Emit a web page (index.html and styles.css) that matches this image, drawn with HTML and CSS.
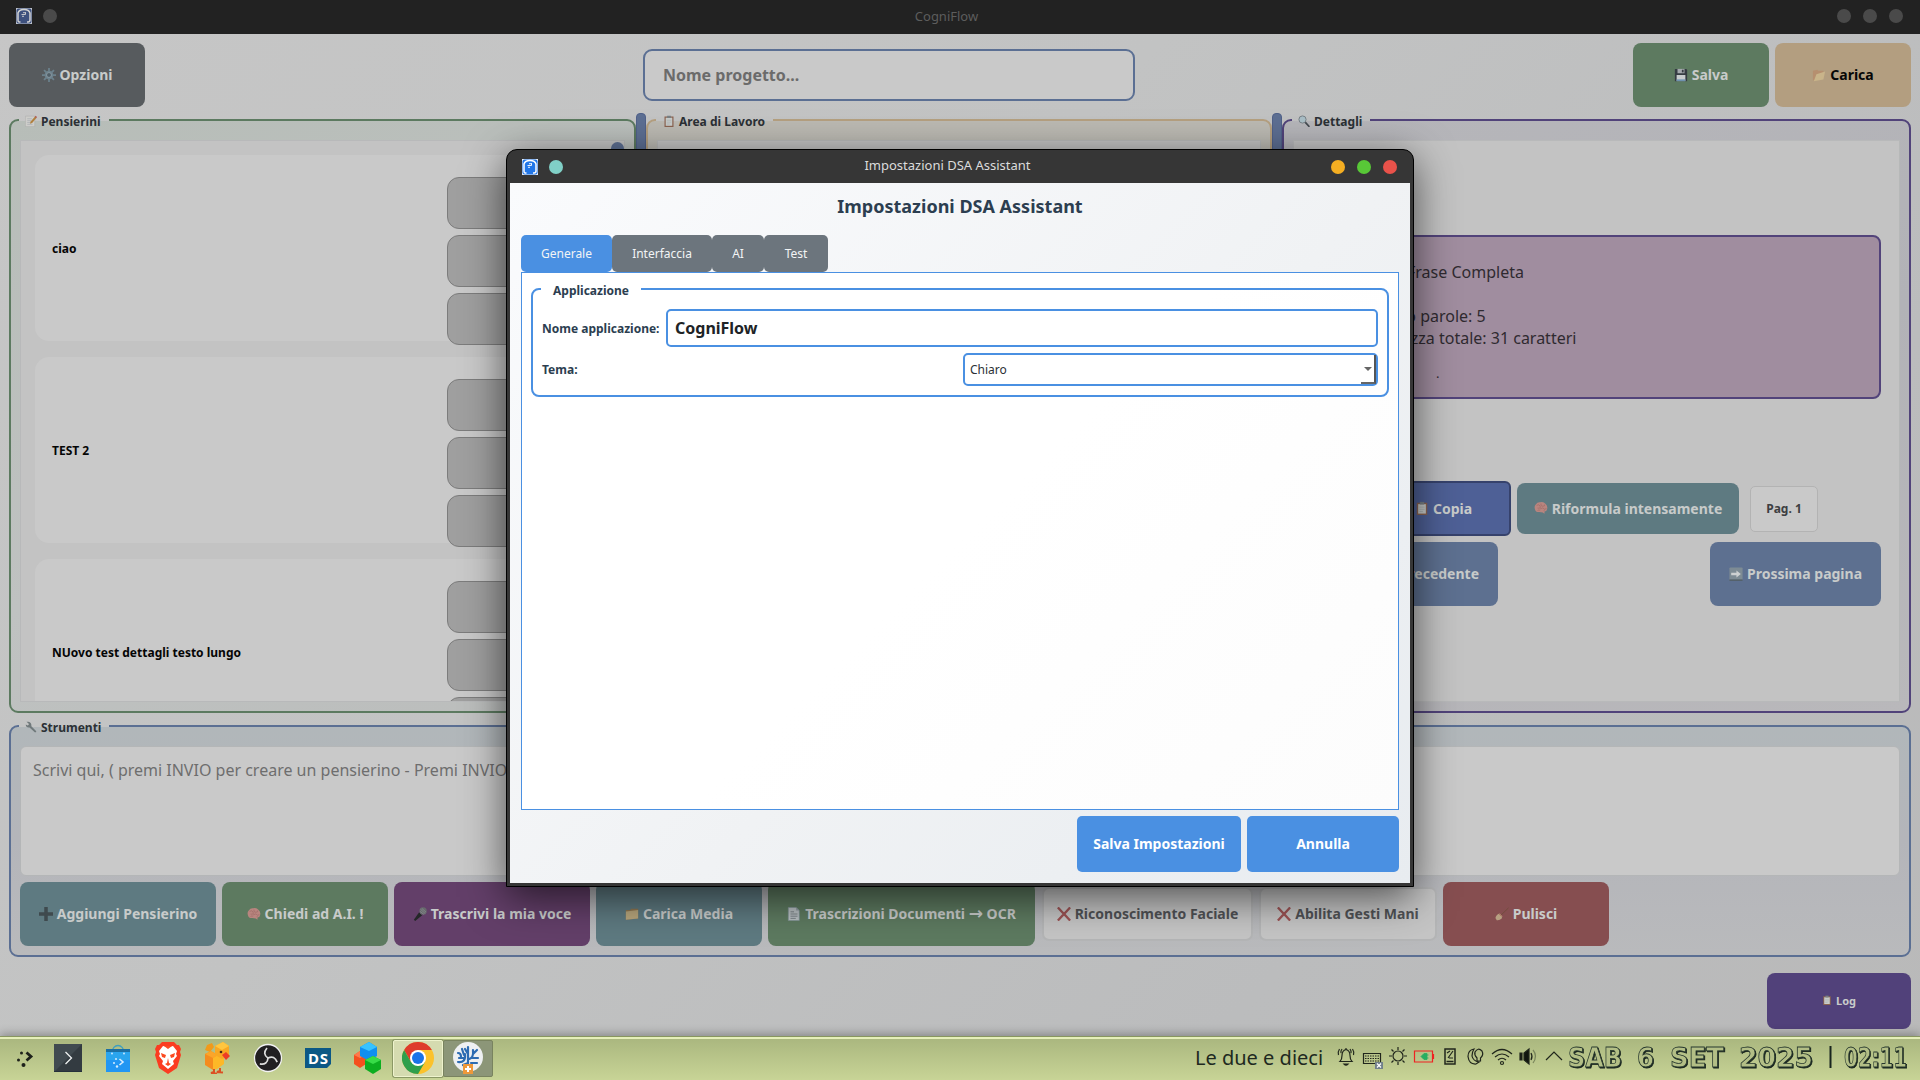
FILE: index.html
```html
<!DOCTYPE html>
<html lang="it">
<head>
<meta charset="utf-8">
<title>CogniFlow</title>
<link rel="stylesheet" href="styles.css">
</head>
<body>
<svg class="sprite" aria-hidden="true">
  <symbol id="app" viewBox="0 0 16 16"><rect width="16" height="16" fill="#e8eef8"/><rect x=".5" y=".5" width="15" height="15" rx="2" fill="currentColor"/><path d="M4.500 14H3Q2 14 2 12V5Q3 1.500 8 1.500T14 5v7q0 2-2 2h-1" fill="none" stroke="#fff" stroke-width="1.500"/><path d="M5.500 13V11L4 9q-.5-4 2-5.500 3-1 5 1 1.500 3-.5 5.500v3" fill="currentColor"/><path d="M5.500 6.500h4M7 4.700h3M6 8.300h2M9.500 6.500v-2" stroke="#fff" stroke-width=".9" fill="none"/></symbol>
  <symbol id="gear" viewBox="0 0 16 16"><path d="M8 0v16M0 8h16M2.300 2.300l11.400 11.400M13.700 2.300L2.300 13.700" stroke="#6c818c" stroke-width="2"/><circle cx="8" cy="8" r="5" fill="#6c818c"/><circle cx="8" cy="8" r="2.800" fill="#4f5d66" stroke="#8b9ba3"/></symbol>
  <symbol id="memo" viewBox="0 0 16 16"><path d="M.5 1.500h12.500V15.500H.5z" fill="#cdcdca" stroke="#a5a5a5" stroke-width=".6"/><path d="M3 5h6M3 7.500h5M3 10h4M3 12.500h7" stroke="#a3a8ac" stroke-width=".8"/><path d="M6.500 11.500l1-3L13.500 2l2 1.500-6 7z" fill="#b0803f"/><path d="M13 2.500l1.200-1.500 1.800 1.600-1 1.400z" fill="#b05656"/></symbol>
  <symbol id="clip" viewBox="0 0 16 16"><path d="M2 2h12v14H2z" fill="#8a6350"/><path d="M3.600 3.600h8.800v10.800H3.600z" fill="#c8ccca"/><path d="M5.500 1h5v3h-5z" fill="#777f84"/><path d="M5 7h6M5 9.500h6M5 12h4" stroke="#a3aaa9" stroke-width=".7"/></symbol>
  <symbol id="lens" viewBox="0 0 16 16"><path d="M9.500 9.500l5 5.500" stroke="#444b50" stroke-width="2.400" stroke-linecap="round"/><circle cx="6" cy="6" r="4.800" fill="#a9bfc7" stroke="#727b80" stroke-width="1.200"/></symbol>
  <symbol id="floppy" viewBox="0 0 16 16"><path d="M1 1h13l1 1v13H1z" fill="#353c42"/><path d="M4 1h8v5H4z" fill="#a4a9ad"/><path d="M9 2h2v3H9z" fill="#353c42"/><path d="M3 8h10v7H3z" fill="#c7cccd"/><path d="M3 13h10v2H3z" fill="#6e92b0"/></symbol>
  <symbol id="open" viewBox="0 0 16 16"><path d="M1 14V3l5-1 1 1h6v3L5 14z" fill="#b68f6f"/><path d="M2 15L5 7l10-3-2 9z" fill="#c9b48a"/></symbol>
  <symbol id="folder" viewBox="0 0 16 16"><path d="M1 14.500V3.500h5l1-1.500h8v11z" fill="#8f7650"/><path d="M1 14.500V5l14-1.500v9.500z" fill="#b8a67c"/></symbol>
  <symbol id="brain" viewBox="0 0 16 16"><path d="M1 9Q0 6 2 4q2-3 5-2.500 4-1 6 1.500 3 2.500 2 6-.5 3-3 3v2.500l-2-1.500-4-.5Q1.500 13 1 9z" fill="#b9857f"/><path d="M3 5q3-2 4 1t-3 2M8 3q-1 3 2 3t2-2M7 9q3-2 5 0M4 11q2-2 3 0M11 11q2-1 3-3" stroke="#9a6762" fill="none" stroke-width=".7"/></symbol>
  <symbol id="plus" viewBox="0 0 16 16"><path d="M8 0v16M0 8h16" stroke="#3f4a4e" stroke-width="4"/></symbol>
  <symbol id="mic" viewBox="0 0 16 16"><path d="M7 6l3.500 3.500-8 6.500-1.500-1.500z" fill="#242728"/><circle cx="11.500" cy="4.500" r="4.200" fill="#66696c"/><path d="M8.500 2.500l5.500 5M10 1.500l5 4.500M8 5l4.500 3.500" stroke="#9a9da0" stroke-width=".6"/></symbol>
  <symbol id="doc" viewBox="0 0 16 16"><path d="M1.500 .5h9L14 4v11.500H1.500z" fill="#b8bfc2" stroke="#809299" stroke-width=".7"/><path d="M10.500.5V4H14" fill="#8d999e"/><path d="M4 5.500h4M4 8h8M4 10.500h8M4 13h6" stroke="#737c80"/></symbol>
  <symbol id="cross" viewBox="0 0 16 16"><path d="M1 .5L8 8l7-7.500M1 15.500L8 8l7 7.500" stroke="#9d5354" stroke-width="2.600" fill="none"/></symbol>
  <symbol id="broom" viewBox="0 0 16 16"><path d="M15.500 1L6 10" stroke="#704c3b" stroke-width="1"/><path d="M5.500 7.500l3 3-1 2.500Q5.500 15.500 2 15L.5 12.500q1-4 5-5z" fill="#b7a082"/><path d="M5 8l3 3" stroke="#9d4a45" stroke-width=".8"/></symbol>
  <symbol id="next" viewBox="0 0 16 16"><rect x=".5" y=".5" width="15" height="15" rx="1" fill="#7d8b94"/><path d="M.5 15h15" stroke="#4d5961" stroke-width="1.500"/><path d="M2.500 6.500h6V4l5 4-5 4V9.500h-6z" fill="#cdd0d1"/></symbol>
  <symbol id="wrench" viewBox="0 0 16 16"><path d="M2 1l3 2.500V5L3.500 6 1 4.500Q1 9 6 8.500L13 15q2 .5 2-1.500L8.500 7Q9 2 4.500 1z" fill="#70797b"/></symbol>
</svg>

<div class="window">
  <header class="bar">
    <div class="bar-side"><svg class="app-icon dim"><use href="#app"/></svg><i class="dot"></i></div>
    <span>CogniFlow</span>
    <div class="bar-side end"><i class="dot"></i><i class="dot"></i><i class="dot"></i></div>
  </header>

  <nav class="toolbar">
    <button class="btn grey w136"><svg class="emo"><use href="#gear"/></svg>Opzioni</button>
    <div class="project">Nome progetto...</div>
    <div class="pair">
      <button class="btn green w136"><svg class="emo"><use href="#floppy"/></svg>Salva</button>
      <button class="btn sand w136"><svg class="emo"><use href="#open"/></svg>Carica</button>
    </div>
  </nav>

  <main class="panels">
    <fieldset class="group g-green">
      <legend><svg class="emo"><use href="#memo"/></svg>Pensierini</legend>
      <div class="well list">
        <article class="card"><b>ciao</b><div class="acts"><i></i><i></i><i></i></div></article>
        <article class="card"><b>TEST 2</b><div class="acts"><i></i><i></i><i></i></div></article>
        <article class="card"><b>NUovo test dettagli testo lungo</b><div class="acts"><i></i><i></i><i></i></div></article>
        <div class="thumb"></div>
      </div>
    </fieldset>
    <div class="splitter"></div>
    <fieldset class="group g-sand">
      <legend class="wide"><svg class="emo"><use href="#clip"/></svg>Area di Lavoro</legend>
      <div class="well"></div>
    </fieldset>
    <div class="splitter"></div>
    <fieldset class="group g-purple">
      <legend><svg class="emo"><use href="#lens"/></svg>Dettagli</legend>
      <div class="well details">
        <div class="summary">
          <p>Frase Completa</p>
          <p class="gap">Numero parole: 5</p>
          <p>Lunghezza totale: 31 caratteri</p>
          <small>.</small>
        </div>
        <div class="row1">
          <button class="btn copy"><svg class="emo"><use href="#clip"/></svg>Copia</button>
          <button class="btn teal reform"><svg class="emo"><use href="#brain"/></svg>Riformula intensamente</button>
          <span class="page">Pag. 1</span>
        </div>
        <div class="row2">
          <button class="btn blue prev">Pagina precedente</button>
          <button class="btn blue nextp"><svg class="emo"><use href="#next"/></svg>Prossima pagina</button>
        </div>
      </div>
    </fieldset>
  </main>

  <fieldset class="group g-blue tools">
    <legend><svg class="emo"><use href="#wrench"/></svg>Strumenti</legend>
    <div class="entry">Scrivi qui, ( premi INVIO per creare un pensierino - Premi INVIO</div>
    <div class="tool-row">
      <button class="btn teal w196"><svg class="emo"><use href="#plus"/></svg>Aggiungi Pensierino</button>
      <button class="btn green w166"><svg class="emo"><use href="#brain"/></svg>Chiedi ad A.I. !</button>
      <button class="btn plum w196"><svg class="emo"><use href="#mic"/></svg>Trascrivi la mia voce</button>
      <button class="btn teal w166"><svg class="emo"><use href="#folder"/></svg>Carica Media</button>
      <button class="btn green w267"><svg class="emo"><use href="#doc"/></svg><span>Trascrizioni Documenti <span class="to">→</span> OCR</span></button>
      <button class="btn light w211"><svg class="emo"><use href="#cross"/></svg>Riconoscimento Faciale</button>
      <button class="btn light w178"><svg class="emo"><use href="#cross"/></svg>Abilita Gesti Mani</button>
      <button class="btn red w166"><svg class="emo"><use href="#broom"/></svg>Pulisci</button>
    </div>
  </fieldset>
  <div class="log-row"><button class="btn violet log"><svg class="emo"><use href="#clip"/></svg>Log</button></div>

  <footer class="taskbar">
    <div class="launchers">
      <span class="task start"><svg width="18" height="18" viewBox="0 0 18 18"><g fill="#1d211b"><circle cx="5.500" cy="4" r="1.500"/><circle cx="2.500" cy="11" r="1.500"/><circle cx="7.500" cy="16" r="2"/></g><path d="M10.500 3.500L15 7.500l-4.500 4" fill="none" stroke="#1d211b" stroke-width="2.800"/></svg></span>
      <span class="task"><svg width="28" height="28" viewBox="0 0 28 28"><path d="M0 0h28v28H0z" fill="#404a50"/><path d="M0 28L28 0v28z" fill="#333b41"/><path d="M0 27.500h28" stroke="#26313a"/><path d="M11.500 8l6 6-6 6" fill="none" stroke="#eef1f2" stroke-width="1.300"/></svg></span>
      <span class="task"><svg width="26" height="28" viewBox="0 0 26 28"><path d="M7 9C7-1 19-1 19 9" fill="none" stroke="#3f9fc0" stroke-width="1.300"/><path d="M1 5h24v4H1z" fill="#1c6fa3"/><path d="M1 8h24v20H1z" fill="#2196f3"/><path d="M1 8h24v8H1z" fill="#2aa5ee"/><g fill="#d6ecff"><circle cx="11" cy="15" r="1"/><circle cx="9" cy="19" r="1"/><circle cx="12" cy="22.500" r="1.200"/><circle cx="7" cy="9.500" r=".9"/><circle cx="19" cy="9.500" r=".9"/></g><path d="M14.500 15l3.500 3-3.500 3" fill="none" stroke="#d6ecff" stroke-width="1.600"/></svg></span>
      <span class="task"><svg width="28" height="32" viewBox="0 0 28 32"><path d="M8 0h12l3 3 2 0 2 4-1 3 1 3-4 13-9 6-9-6L1 13l1-3-1-3 2-4h2z" fill="#fb3c21"/><path d="M14 5l5-1 4 5-1 3 1 2-4 5 1 3-6 5-6-5 1-3-4-5 1-2-1-3 4-5z" fill="#fff"/><path d="M7 11l5 2-1 3-3-1zM21 11l-5 2 1 3 3-1zM14 16l1 5 2 1-3 2-3-2 2-1zM10 4l4 3 4-3" fill="#fb4a21"/></svg></span>
      <span class="task"><svg width="28" height="32" viewBox="0 0 28 32"><path d="M3 3l5-2 2 4-4 5-5-2z" fill="#f19a1b"/><path d="M1 12l6-3 7 4v12l-5 3-8-5z" fill="#f58c1e"/><path d="M1 12l6-3 7 4-5 3z" fill="#fba52a"/><path d="M9 16l5-3 6 3v6l-7 5-4 1z" fill="#fdb827"/><path d="M11 4l8-4 6 4v9l-7 4-7-4z" fill="#f8a823"/><path d="M11 4l8-4 6 4-7 4z" fill="#ffc63f"/><path d="M18 13l4-3 4 4-4 4z" fill="#ed3d25"/><circle cx="17" cy="10" r="1.300" fill="#432a19"/><path d="M10 27v3l-3 1 6 .5M16 26v3l-3 1 6 .5" fill="none" stroke="#dc5023" stroke-width="2"/></svg></span>
      <span class="task"><svg width="30" height="30" viewBox="0 0 30 30"><circle cx="15" cy="15" r="13.500" fill="#211f22" stroke="#f2f2f2" stroke-width="1.300"/><g fill="none" stroke="#ddd" stroke-width="1.700"><path id="ob" d="M15 15Q9 11 14 5"/><use href="#ob" transform="rotate(120 15 15)"/><use href="#ob" transform="rotate(240 15 15)"/></g></svg></span>
      <span class="task"><svg width="28" height="22" viewBox="0 0 28 22"><path d="M1 1h26v16l-4 4H1z" fill="#0b5885"/><text x="14" y="17" text-anchor="middle" textLength="20" class="ds">DS</text></svg></span>
      <span class="task"><svg width="28" height="32" viewBox="0 0 28 32"><path d="M0 13l6-4 6 4v9l-6 4-6-4z" fill="#f4501e"/><path d="M0 13l6-4 6 4-6 3z" fill="#ff7a4b"/><path d="M6 5l9-5 8 5v9l-8 5-9-5z" fill="#0f8ff0"/><path d="M6 5l9-5 8 5-8 4z" fill="#36c3ff"/><path d="M11 18l8-4 8 4v9l-8 5-8-5z" fill="#0cae20"/><path d="M11 18l8-4 8 4-8 4z" fill="#37dc48"/></svg></span>
      <span class="task on"><svg width="32" height="32" viewBox="0 0 32 32"><circle cx="16" cy="16" r="16" fill="#fbc22b"/><path d="M16 8h13.860A16 16 0 0 0 2.140 8L9 20z" fill="#de3b2c"/><path d="M2.140 8A16 16 0 0 0 16 32l7-12-7 4-7-4z" fill="#2f9f4c"/><circle cx="16" cy="16" r="8" fill="#fff"/><circle cx="16" cy="16" r="6" fill="#1a73e8"/></svg></span>
      <span class="task active"><svg width="30" height="32" viewBox="0 0 30 32"><circle cx="15" cy="15" r="15" fill="#eef0f2"/><path d="M5 11q3 0 3 4M5 20q8 1 7-8M9 7l2 6M15 5v17M15 12l-3-5M15 17q6 0 5-9M20 12l4-4M19 16h6M18 21h6M15 21l-5 2M6 16h5" stroke="#2c6bb2" stroke-width="2.200" fill="none" stroke-linecap="round"/><path d="M10 22h10v10H10z" fill="#ee983a"/><path d="M15 24v6M12 27h6" stroke="#fff" stroke-width="2"/></svg></span>
    </div>
    <div class="tray">
      <span class="fuzzy">Le due e dieci</span>
      <svg class="tray-icons" width="229" height="26" viewBox="0 0 229 26" fill="none" stroke="#20261c" stroke-width="1.200">
        <path d="M4 16.500h12q-2-2-2-6 0-5-4-6-4 1-4 6 0 4-2 6zM10 3v2M2.500 10q-1-3 1-6M5 8q-.5-2 1-4M17.500 10q1-3-1-6M15 8q.5-2-1-4"/><path d="M8 19q2 2 4 0z" fill="#20261c"/>
        <path d="M27.500 8.500h17v10h-17z"/><path d="M29 11h14M29 13.500h14M29 16h14" stroke-dasharray="1.500 1"/><path d="M39 17h8v7h-8z" fill="#71808a" stroke="none"/><path d="M41 18.500l4 4M45 18.500l-4 4" stroke="#fff"/>
        <circle cx="62" cy="11" r="5"/><path d="M62 2v3M62 17v3M53 11h3M68 11h3M55.500 4.500l2 2M66.500 15.500l2 2M68.500 4.500l-2 2M57.500 15.500l-2 2"/>
        <path d="M78.500 6h18v11h-18z" stroke="#ef2222"/><path d="M97.500 9v5" stroke="#ef2222"/><path d="M85 11.500l3-3h3v6h-3zM90 10h2.500M90 13h2.500" fill="#27ae60" stroke="#27ae60" stroke-width=".8"/>
        <path d="M109 4h10v15h-10zM110.500 16.500h7" stroke-width="1.500"/><path d="M112 13l5-7M111 8l3-2M113 13h4"/>
        <path d="M138 4q-6 1-6 7.500 1 8 8 7.500l3-2q-6-1-7-6 0-4 2-7z"/><path d="M141 13q-3-3-2-6 3-5 7-1 2 4-1.500 7v3H141z"/>
        <path d="M156 9q10-9 20 0M159 12q7-6 14 0M162 15q4-3.500 8 0"/><circle cx="166" cy="18" r="1.500"/>
        <path d="M184 8v7h2V8zM188 8l5-4v15l-5-4z" fill="#10150e"/><path d="M195 8q2 3.500 0 7"/><path d="M197 5q5 6 0 13" stroke="#78855b"/>
        <path d="M210 15l8-8 8 8"/>
      </svg>
      <svg class="clock" width="350" height="38" viewBox="0 0 350 38">
        <text x="3" y="28" textLength="54" lengthAdjust="spacingAndGlyphs">SAB</text><text x="72" y="28" textLength="17" lengthAdjust="spacingAndGlyphs">6</text><text x="105" y="28" textLength="54" lengthAdjust="spacingAndGlyphs">SET</text><text x="174" y="28" textLength="74" lengthAdjust="spacingAndGlyphs">2025</text><text x="279" y="28" textLength="63" lengthAdjust="spacingAndGlyphs">02:11</text>
        <path d="M265.500 7v22" stroke="#18241e" stroke-width="2"/>
      </svg>
    </div>
  </footer>
</div>

<section class="dialog">
  <header class="bar">
    <div class="bar-side"><svg class="app-icon"><use href="#app"/></svg><i class="dot aqua"></i></div>
    <span>Impostazioni DSA Assistant</span>
    <div class="bar-side end"><i class="dot amber"></i><i class="dot lime"></i><i class="dot rose"></i></div>
  </header>
  <div class="dialog-body">
    <h1>Impostazioni DSA Assistant</h1>
    <div class="tabs"><span class="tab t1">Generale</span><span class="tab t2">Interfaccia</span><span class="tab t3">AI</span><span class="tab t4">Test</span></div>
    <div class="pane">
      <fieldset class="settings">
        <legend>Applicazione</legend>
        <div class="field"><label>Nome applicazione:</label><div class="input">CogniFlow</div></div>
        <div class="field"><label>Tema:</label><div class="select">Chiaro<i class="arrow"></i></div></div>
      </fieldset>
    </div>
    <div class="actions"><button class="primary save">Salva Impostazioni</button><button class="primary cancel">Annulla</button></div>
  </div>
</section>
</body>
</html>
```
FILE: styles.css
```css
* { box-sizing: border-box; }
body { margin: 0; font-family: "Noto Sans", sans-serif; font-size: 12px; width: 1920px; height: 1080px; overflow: hidden; position: relative; }
button { font-family: inherit; border: 0; padding: 0; }
p { margin: 0; }
fieldset { margin: 0; min-inline-size: 0; }
.sprite { display: none; }

.window { height: 1080px; display: flex; flex-direction: column; background: linear-gradient(135deg, #c6c6c6, #c2c3c3 40%, #bbbcbd 75%, #b9b9b9); }

/* Title bars */
.bar { display: grid; grid-template-columns: 1fr auto 1fr; align-items: center; height: 34px; padding: 0 17px 2px 16px; background: #222; color: #5d5d5d; font-size: 13px; flex: none; }
.bar > span { position: relative; left: -13px; }
.bar-side { display: flex; align-items: center; gap: 11px; }
.bar-side.end { justify-content: flex-end; gap: 12px; }
.app-icon { width: 16px; height: 16px; color: #2277e8; }
.app-icon.dim { color: #455d96; opacity: .8; }
.dot { width: 14px; height: 14px; border-radius: 50%; background: #4a4a4a; }
.aqua { background: #80d0c7; }
.amber { background: #f4ae22; }
.lime { background: #58c837; }
.rose { background: #e9524a; }

/* Buttons */
.btn { display: flex; align-items: center; justify-content: center; gap: 4px; height: 64px; padding-bottom: 1px; border-radius: 8px; font-size: 14px; font-weight: 700; color: #c8cbca; flex: none; white-space: nowrap; }
.emo { width: 14px; height: 14px; flex: none; }
.grey { background: #575b5e; }
.green { background: #5d7a60; }
.sand { background: #b39e80; color: #060606; }
.teal { background: #5e7a81; }
.plum { background: #633f69; }
.blue { background: #5d7090; }
.red { background: #864e50; }
.violet { background: #51417a; }
.light { height: 54px; background: #c5c5c5; border: 2px solid #b4b5b6; color: #505255; border-radius: 7px; }
.to { font-family: "DejaVu Sans", sans-serif; font-size: 17px; line-height: 14px; }
.w136 { width: 136px; }
.w166 { width: 166px; }
.w178 { width: 178px; }
.w196 { width: 196px; }
.w211 { width: 211px; }
.w267 { width: 267px; }

/* Toolbar */
.toolbar { display: flex; align-items: center; margin: 9px 9px 0; height: 64px; flex: none; }
.project { width: 492px; height: 52px; margin-left: 498px; border: 2px solid #5b6f93; border-radius: 9px; background: #c9c9c9; color: #6b6b6b; font-size: 16px; font-weight: 700; line-height: 48px; padding-left: 18px; }
.pair { display: flex; gap: 6px; margin-left: auto; }

/* Group boxes */
.panels { display: flex; margin: 4px 9px 0; height: 602px; flex: none; }
.group { border: 2px solid; border-radius: 9px; padding: 11px 9px 9px; display: flex; flex-direction: column; }
.group legend { display: flex; align-items: center; gap: 4px; height: 18px; margin-left: -1px; padding: 2px 8px 0 6px; font-size: 12px; font-weight: 700; color: #2b3035; white-space: nowrap; }
.group legend .emo { width: 12px; height: 12px; }
.group legend.wide { padding-left: 7px; }
.g-green { width: 627px; border-color: #5c7a60; background: linear-gradient(160deg, #b7bdb8, #bfc2c1 60%, #bbbdbc); }
.g-sand { width: 626px; border-color: #b5a080; background: linear-gradient(#bcbab3, #c0bfbc); }
.g-purple { width: 629px; border-color: #51437a; background: linear-gradient(160deg, #b6b6ba, #b2b2b7 50%, #b9b8bb); }
.g-blue { border-color: #5b6f93; background: linear-gradient(#b1b7ba, #b4b5ba 50%, #b9babc); }
.well { flex: 1; min-height: 0; background: #c3c3c3; border: 1px solid #b8b9ba; border-right-color: #b6b8b8; overflow: hidden; }
.splitter { width: 10px; margin-top: 2px; background: #5d6f93; border: 1px solid #50618a; border-radius: 4px; }
.list { position: relative; padding: 14px 40px 0 14px; display: flex; flex-direction: column; gap: 16px; }
.thumb { position: absolute; right: 0; top: 1px; width: 13px; height: 250px; border-radius: 7px; background: #5e7094; }
.card { display: flex; justify-content: space-between; height: 186px; padding: 22px 12px 0 17px; border-radius: 14px; background: #c9c9c9; flex: none; color: #050505; }
.card b { align-self: center; position: relative; top: -11px; }
.acts { display: flex; flex-direction: column; gap: 6px; width: 125px; }
.acts i { height: 52px; flex: none; border: 1px solid #7c7c7c; border-radius: 12px; background: #9f9f9f; }

/* Details */
.details { padding: 94px 18px 0 17px; display: flex; flex-direction: column; }
.summary { height: 164px; border: 2px solid #52437a; border-radius: 8px; background: #a08d9f; color: #2f2a30; font-size: 16px; line-height: 22px; padding: 24px 0 0 41px; flex: none; }
.summary p:first-child { padding-left: 53px; }
.summary .gap { margin-top: 22px; }
.summary small { display: block; padding-left: 82px; margin-top: 13px; font-size: 13px; }
.row1 { display: flex; align-items: center; margin-top: 82px; height: 55px; padding-left: 65px; flex: none; }
.copy { width: 135px; height: 55px; background: #4e6096; border: 2px solid #36426c; border-radius: 6px; }
.reform { width: 222px; height: 51px; margin-left: 6px; }
.page { width: 68px; height: 46px; margin-left: 11px; border: 1px solid #b3b3b3; border-radius: 5px; background: #c9c9c9; text-align: center; line-height: 44px; font-weight: 700; color: #3d3f42; }
.row2 { display: flex; justify-content: space-between; margin-top: 6px; }
.prev { width: 187px; justify-content: flex-end; padding-right: 19px; }
.nextp { width: 171px; }

/* Tools */
.tools { margin: 4px 9px 0; height: 240px; flex: none; }
.entry { height: 130px; border: 1px solid #b4b6b7; border-radius: 6px; background: #c9c9c9; color: #6e6e6e; font-size: 16px; line-height: 22px; padding: 12px; flex: none; white-space: nowrap; }
.tool-row { display: flex; align-items: center; gap: 6px; margin-top: 6px; height: 64px; }
.tool-row .light:nth-child(6) { margin-left: 1px; }
.log-row { display: flex; justify-content: flex-end; margin: 16px 9px 0; flex: none; }
.log { width: 144px; height: 56px; font-size: 11px; padding-bottom: 2px; }
.log .emo { width: 10px; height: 10px; }

/* Taskbar */
.taskbar { margin-top: auto; height: 44px; display: flex; justify-content: space-between; align-items: center; padding: 0 5px 1px 0; background: linear-gradient(#a9b67e, #c8d496); border-top: 1px solid #88965f; box-shadow: inset 0 2px #e5efb9, 0 -2px 9px rgba(0,0,0,.3); }
.launchers { display: flex; align-items: center; }
.task { width: 50px; height: 37px; display: flex; align-items: center; justify-content: center; border: 1px solid transparent; border-radius: 2px; }
.task.start { width: 36px; margin-left: 7px; }
.task.on { background: #d5dbb0; border-color: #eef3cd; box-shadow: 0 0 0 1px #8b9865; }
.task.active { background: #8c9678; border-color: #79835f; }
.ds { font: 700 15px "Noto Sans", sans-serif; fill: #fff; }
.tray { display: flex; align-items: center; }
.fuzzy { font-size: 20px; line-height: 26px; color: #20291f; width: 141px; white-space: nowrap; }
.clock { overflow: visible; }
.clock text { font: 700 27px "DejaVu Sans", sans-serif; fill: #b3bf86; stroke: #27382e; stroke-width: .8px; filter: drop-shadow(1.500px 1.500px 0 #18241e); }

/* Settings dialog */
.dialog { position: absolute; left: 506px; top: 149px; width: 908px; height: 738px; border: 1px solid #000; border-radius: 11px 11px 0 0; background: #363636; display: flex; flex-direction: column; padding: 0 3px 3px; box-shadow: 0 10px 42px rgba(0,0,0,.62); }
.dialog .bar { height: 33px; padding: 0 13px 0 12px; background: transparent; color: #dcdcdc; }
.dialog .bar > span { left: -12px; top: -2px; }
.dialog-body { flex: 1; background: linear-gradient(135deg, #fafbfd, #f0f2f4 55%, #e8ecf0); padding: 0 11px 11px; display: flex; flex-direction: column; }
h1 { margin: 0; height: 52px; line-height: 46px; text-align: center; font-size: 18px; font-weight: 700; color: #2c3e50; }
.tabs { display: flex; height: 37px; }
.tab { background: #6c757d; color: #f2f4f5; border-radius: 5px; text-align: center; line-height: 38px; }
.t1 { width: 91px; background: #4a90e2; }
.t2 { width: 100px; }
.t3 { width: 52px; }
.t4 { width: 64px; }
.pane { height: 538px; border: 1px solid #4a90e2; background: linear-gradient(135deg, #fff 50%, #fcfcfc); padding: 7px 9px; }
.settings { height: 117px; border: 2px solid #4a90e2; border-radius: 8px; padding: 11px 9px 0; }
.settings legend { height: 18px; line-height: 22px; margin-left: -1px; padding: 0 12px; font-weight: 700; color: #2c3e50; }
.field { display: flex; align-items: center; justify-content: space-between; color: #2c3e50; font-weight: 700; white-space: nowrap; }
.field + .field { margin-top: 6px; }
.input { width: 712px; height: 38px; border: 2px solid #4a90e2; border-radius: 5px; background: #fff; color: #202326; font-size: 16px; line-height: 35px; padding-left: 7px; }
.select { width: 415px; height: 33px; border: 2px solid #4a90e2; border-radius: 5px; background: #fff; color: #2b3035; font-weight: 400; line-height: 30px; padding-left: 5px; display: flex; justify-content: space-between; }
.arrow { width: 15px; height: 29px; border-right: 2px solid #555; border-bottom: 2px solid #666; display: flex; align-items: center; justify-content: center; }
.arrow::before { content: ""; border: 4px solid transparent; border-top: 4px solid #666; border-bottom: 0; }
.actions { display: flex; justify-content: flex-end; gap: 6px; margin-top: 6px; }
.primary { height: 56px; padding-bottom: 2px; border-radius: 5px; background: #4a90e2; color: #fff; font-weight: 700; font-size: 14px; }
.save { width: 164px; }
.cancel { width: 152px; }
```
